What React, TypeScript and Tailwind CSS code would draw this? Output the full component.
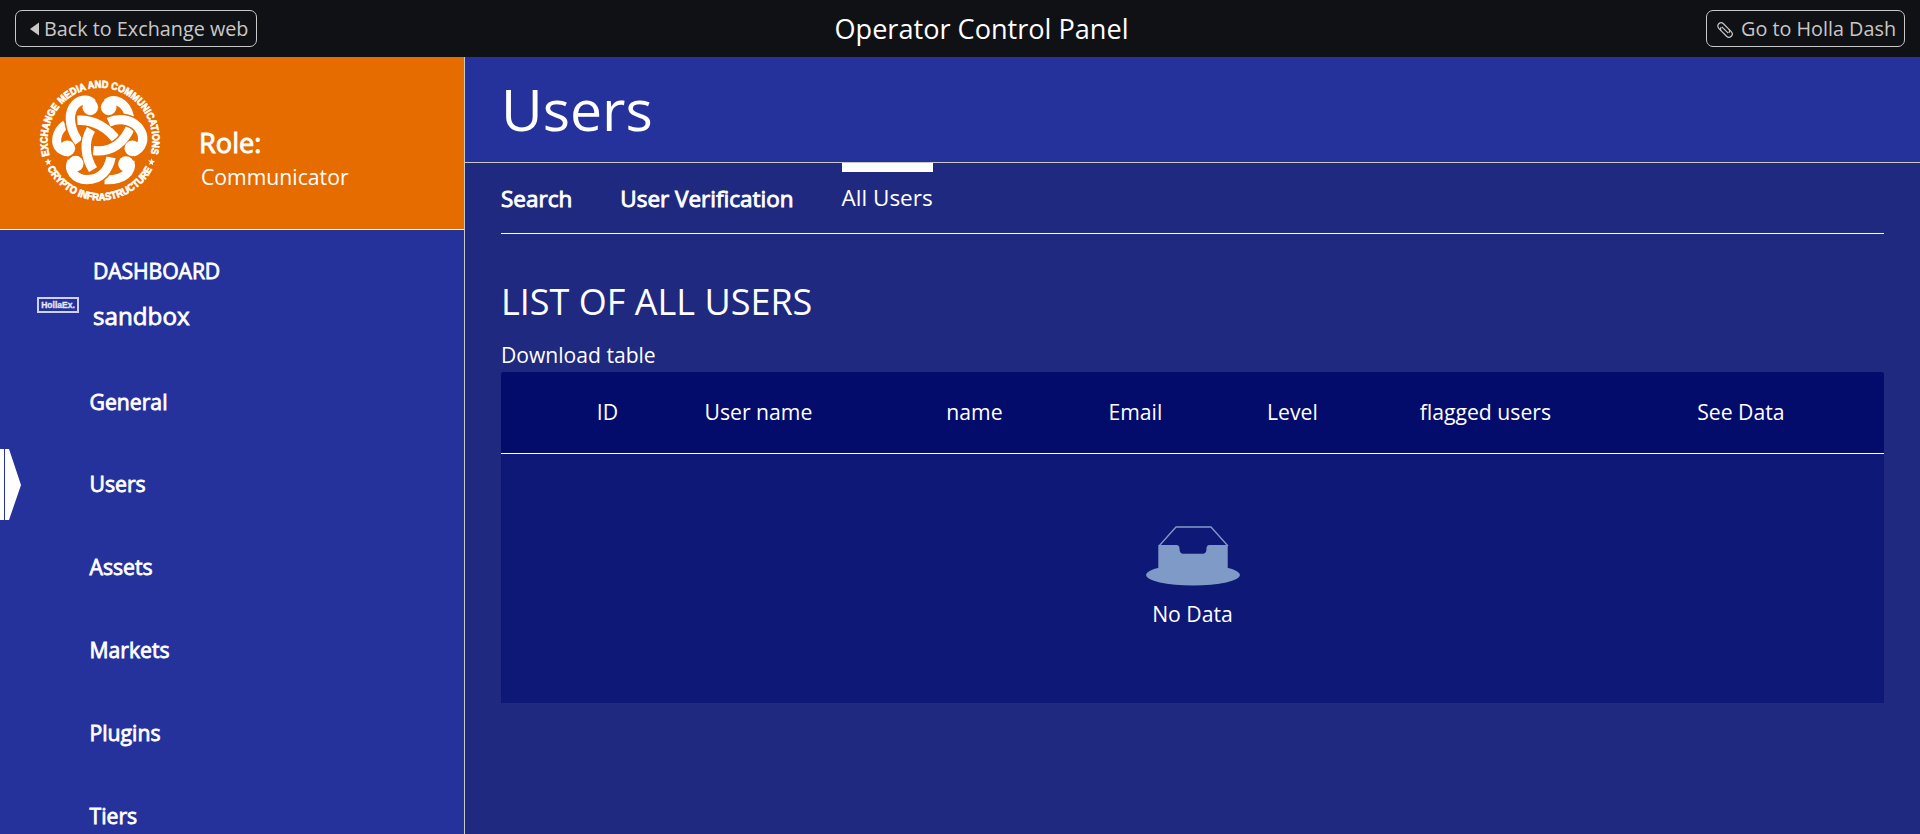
const NAV_ITEMS = ['General', 'Users', 'Assets', 'Markets', 'Plugins', 'Tiers'];

const COLUMNS = ['ID', 'User name', 'name', 'Email', 'Level', 'flagged users', 'See Data'];

function Band({ d }: { d: string }) {
  return (
    <g fill="none">
      <path d={d} stroke="#e66c00" strokeWidth="37" />
      <path d={d} stroke="#fff" strokeWidth="28" />
    </g>
  );
}

function RoleEmblem() {
  return (
    <svg viewBox="0 0 480 480" className="block size-[160px] shrink-0">
      <defs>
        <path id="ring-top" d="M 89 286 A 157.500 157.500 0 1 1 391 286" />
        <path id="ring-bottom" d="M 82 325 A 178 178 0 0 0 398 325" />
      </defs>
      <g
        fill="#fff"
        stroke="#fff"
        strokeWidth="2"
        fontFamily="'Liberation Sans Narrow', 'Liberation Sans', sans-serif"
        fontWeight="700"
        fontSize="31"
      >
        <text textLength="580" lengthAdjust="spacingAndGlyphs">
          <textPath href="#ring-top">EXCHANGE MEDIA AND COMMUNICATIONS</textPath>
        </text>
        <text textLength="386" lengthAdjust="spacingAndGlyphs">
          <textPath href="#ring-bottom">CRYPTO INFRASTRUCTURE</textPath>
        </text>
      </g>
      <g fill="#fff">
        <path d="M84 295l3 7 8-.5-6 5.500 3.500 7.500-7-3.500-6 5 1-8-7-4 8-1.500z" />
        <path d="M395 295l-3 7-8-.5 6 5.500-3.500 7.500 7-3.500 6 5-1-8 7-4-8-1.500z" />
      </g>
      <path
        d="M137 193C109 213 101 250 121 267C129 273 137 276 146 275"
        fill="none"
        stroke="#fff"
        strokeWidth="27"
      />
      <Band d="M217 130C203 114 174 118 160 141C142 170 153 215 177 246" />
      <g fill="none" stroke="#fff" strokeWidth="27">
        <path d="M260 130C281 112 318 124 329 172" />
        <path d="M330 305C338 336 310 362 254 359" />
      </g>
      <Band d="M156 304C143 330 164 358 200 359C244 359 266 328 273 292" />
      <Band d="M172 181C222 178 266 204 294 246" />
      <Band d="M220 272C274 278 312 250 333 198" />
      <Band d="M266 187C303 170 344 182 361 211C377 237 365 268 338 276" />
      <path d="M213 206C191 245 195 290 219 329" fill="none" stroke="#e66c00" strokeWidth="36" />
      <path d="M213 208C191 245 195 290 219 329" fill="none" stroke="#fff" strokeWidth="28" />
      <g fill="#fff">
        <circle cx="211" cy="142" r="23.500" />
        <circle cx="266" cy="142" r="23.500" />
        <circle cx="142" cy="265" r="23.500" />
        <circle cx="337" cy="265" r="23.500" />
        <circle cx="167" cy="311" r="23.500" />
        <circle cx="318" cy="312" r="23.500" />
      </g>
    </svg>
  );
}

function EmptyTray() {
  return (
    <svg viewBox="0 0 94 60" className="block h-[60px] w-[94px]">
      <ellipse cx="47" cy="49" rx="47" ry="10.500" fill="#809ac8" />
      <path d="M13 20L30 1h35l17 19" fill="none" stroke="#809ac8" strokeWidth="1.300" />
      <path
        d="M12.300 19h18c2.500 0 3.200 1.600 3.200 3.700 0 2.700 1 5 3.200 5h20.600c2.200 0 3.200-2.300 3.200-5 0-2.100.8-3.700 3.200-3.700h18v26c0 4-15 8-34.700 8S12.300 49 12.300 45z"
        fill="#809ac8"
      />
    </svg>
  );
}

function ClipIcon() {
  return (
    <svg viewBox="0 0 18 18" className="block size-[18px]" fill="none" stroke="#c8c8c8" strokeWidth="1.200">
      <g transform="rotate(45 9 9)">
        <path d="M6.500 12.300H3.500a3.300 3.300 0 0 1 0-6.600h7.500a2.900 2.900 0 0 1 2.700 2.700" />
        <path d="M11.500 5.700h3a3.300 3.300 0 0 1 0 6.600H7a2.900 2.900 0 0 1-2.700-2.700" />
        <path d="M4.500 9h9" />
      </g>
    </svg>
  );
}

function TopBar() {
  return (
    <header className="grid h-[57px] shrink-0 grid-cols-3 items-center bg-[#101114] px-[15px] text-[19.800px] text-[#c8c8c8]">
      <div className="flex">
        <button className="flex h-[37px] w-[242px] items-center rounded-[7px] border border-[#c8c8c8] pl-[14px] whitespace-nowrap">
          <svg viewBox="0 0 9 14" className="mr-[5px] h-[14px] w-[9px]">
            <path d="M0 7L9 .5v13z" fill="#c8c8c8" />
          </svg>
          Back to Exchange web
        </button>
      </div>
      <h1 className="pt-[2px] pl-[43px] text-center text-[27.100px] text-white">Operator Control Panel</h1>
      <div className="flex justify-end">
        <button className="flex h-[37px] w-[199px] items-center rounded-[7px] border border-[#c8c8c8] pl-[9px] whitespace-nowrap">
          <span className="mr-[7px] pt-0.5">
            <ClipIcon />
          </span>
          Go to Holla Dash
        </button>
      </div>
    </header>
  );
}

function Sidebar() {
  return (
    <aside className="flex w-[465px] shrink-0 flex-col border-r border-[#c8c8c8] bg-[#26329b]">
      <section className="flex h-[173px] shrink-0 border-b border-white bg-[#e66c00] pt-[3px] pl-5">
        <RoleEmblem />
        <div className="pt-[64px] pl-[19px]">
          <p className="text-[27.200px] leading-[38px] [-webkit-text-stroke:0.9px_white]">Role:</p>
          <p className="pl-[2px] text-[21.200px] leading-[30px]">Communicator</p>
        </div>
      </section>
      <section className="flex shrink-0 pt-[25px] pl-[37px]">
        <div className="mt-[42px] flex h-[16px] w-[42px] items-center justify-center border-2 border-[#cfd2ec] font-['Liberation_Sans'] text-[8.500px] font-bold text-[#e6e8f8] [-webkit-text-stroke:0.3px_#e6e8f8]">
          HollaEx.
        </div>
        <div className="pl-[14px]">
          <p className="text-[21.200px] leading-[32px] tracking-[-0.1px] [-webkit-text-stroke:0.8px_white]">DASHBOARD</p>
          <p className="pt-[12px] text-[24.200px] leading-[34px] [-webkit-text-stroke:0.8px_white]">sandbox</p>
        </div>
      </section>
      <nav className="mt-[27px] flex flex-col">
        {NAV_ITEMS.map((item) => (
          <a key={item} className="flex h-[82.900px] shrink-0 items-center">
            <span className="w-[89.500px]">
              {item === 'Users' && (
                <svg viewBox="0 0 21 71" className="block h-[71px] w-[21px]" fill="#fff">
                  <path d="M0 0h4v71H0z" />
                  <path d="M5 0h4l12 36L9 71H5z" />
                </svg>
              )}
            </span>
            <span className="text-[21.200px] [-webkit-text-stroke:0.8px_white]">{item}</span>
          </a>
        ))}
      </nav>
    </aside>
  );
}

function UsersTable() {
  return (
    <div className="flex h-[331px] flex-col rounded-t-[3px] bg-[#0e1877] text-[21.200px]">
      <div className="grid h-[82px] shrink-0 grid-cols-[94px_208px_224px_98px_216px_170px_286px] items-center justify-start rounded-t-[3px] border-b border-white bg-[#030b6b] pb-[1px] pl-[59.400px] text-center [&>*:last-child]:pl-[55px]">
        {COLUMNS.map((column) => (
          <span key={column} className="whitespace-nowrap">
            {column}
          </span>
        ))}
      </div>
      <div className="flex flex-col items-center pt-[72px]">
        <EmptyTray />
        <p className="pt-[12px] leading-[32px]">No Data</p>
      </div>
    </div>
  );
}

export default function App() {
  return (
    <div className="flex h-[834px] w-full flex-col overflow-hidden font-['Open_Sans',sans-serif] text-white">
      <TopBar />
      <div className="flex min-h-0 flex-1">
        <Sidebar />
        <main className="flex flex-1 flex-col bg-[#1f297f]">
          <div className="flex h-[106px] shrink-0 items-center border-b border-[#c8c8c8] bg-[#26329b] pb-[2px] pl-[36px]">
            <h2 className="text-[57.200px] leading-[78px]">Users</h2>
          </div>
          <div className="px-[36px]">
            <div className="flex h-[71px] gap-[48px] border-b border-white text-[22.500px] leading-[54px]">
              <a className="pt-[9px] [-webkit-text-stroke:0.9px_white]">Search</a>
              <a className="pt-[9px] [-webkit-text-stroke:0.9px_white]">User Verification</a>
              <a className="border-t-[9px] border-white leading-[52px]">All Users</a>
            </div>
            <h3 className="pt-[43px] text-[36px] leading-[50px]">LIST OF ALL USERS</h3>
            <p className="pt-[12px] pb-[1px] text-[21.100px] leading-[32px]">Download table</p>
            <UsersTable />
          </div>
        </main>
      </div>
    </div>
  );
}
